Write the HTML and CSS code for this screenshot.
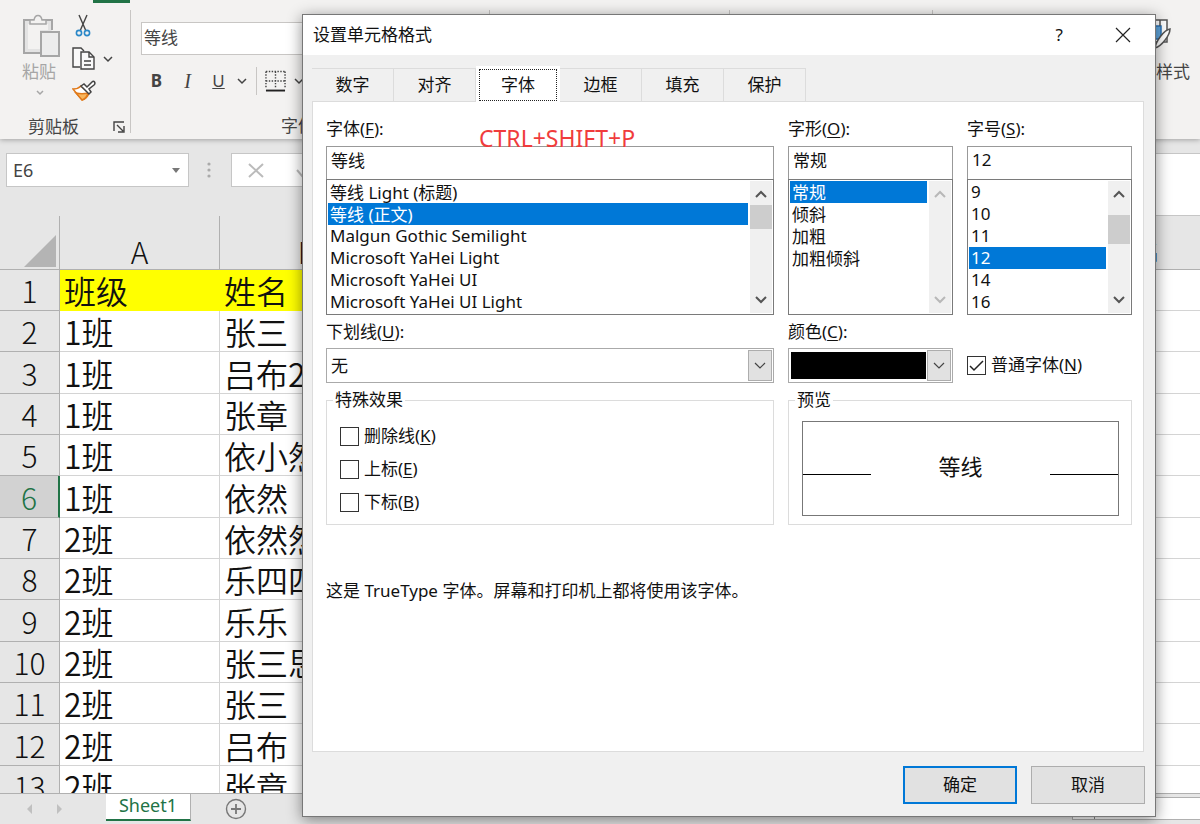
FILE: index.html
```
<!DOCTYPE html>
<html lang="zh-CN">
  <head>
    <meta charset="utf-8" />
    <title>设置单元格格式</title>
    <link rel="stylesheet" href="styles.css" />
  </head>
  <body>
    <div class="excel">
      <header class="ribbon">
        <div class="active-tab"></div>
        <div class="groups">
          <section class="group clipboard">
            <div class="group-body">
              <button class="paste" disabled>
                <svg width="40" height="44" viewBox="0 0 40 44" fill="none" stroke="#a6a6a6" stroke-width="2">
                  <path d="M18 39H2V6h28v10" fill="#e3e3e3" stroke="none" />
                  <path d="M6 35V10h20v6h-8v19z" stroke="none" fill="#f3f2f1" />
                  <path d="M18 39H2V6h28v10" />
                  <path d="M8 10V6h4c1-6 7-6 8 0h4v4z" fill="#f3f2f1" stroke-width="1.5" />
                  <path d="M19 18h18v24H19z" fill="#ececec" />
                </svg>
                <span>粘贴</span>
                <svg class="chevron" width="8" height="6" viewBox="0 0 8 6"><path d="M1 1l3 3 3-3" /></svg>
              </button>
              <div class="clip-tools">
                <button aria-label="剪切">
                  <svg width="16" height="24" viewBox="0 0 16 24" fill="none">
                    <path d="M4 1l7 16M12 1L5 17" stroke="#444" stroke-width="1.4" />
                    <circle cx="4" cy="19" r="2.6" stroke="#2b88c8" stroke-width="1.6" />
                    <circle cx="12" cy="19" r="2.6" stroke="#2b88c8" stroke-width="1.6" />
                  </svg>
                </button>
                <button aria-label="复制">
                  <svg width="24" height="24" viewBox="0 0 24 24" fill="#f9f9f9" stroke="#444" stroke-width="1.4">
                    <path d="M8 20H1V1h8l3 3" />
                    <path d="M9 5h8l5 5v12H9z" />
                    <path d="M17 5v5h5M12 14h7M12 18h7" fill="none" />
                  </svg>
                  <svg class="chevron" width="10" height="7" viewBox="0 0 10 7"><path d="M1 1l4 4 4-4" /></svg>
                </button>
                <button aria-label="格式刷">
                  <svg width="24" height="22" viewBox="0 0 24 22" fill="#fff" stroke-width="1.5">
                    <path d="M9 6C7 8 4 9 1 9l9 11c4-1 6-4 7-7z" stroke="#e07a1b" />
                    <path d="M4 13c4 1 8 1 12 0-1 4-3 6-6 7z" fill="#f9b65c" stroke="#e07a1b" />
                    <path d="M9 6l3-2 3 3 5-5c2-2 4 1 2 3l-5 4 2 3-2 2z" stroke="#444" />
                  </svg>
                </button>
              </div>
            </div>
            <footer>
              <span>剪贴板</span>
              <button class="launcher" aria-label="剪贴板选项">
                <svg width="12" height="12" viewBox="0 0 12 12" fill="none" stroke="#444" stroke-width="1.4">
                  <path d="M1 10V1h10M4 4l6 6M11 5v6H5" />
                </svg>
              </button>
            </footer>
          </section>
          <section class="group font-group">
            <input class="ribbon-font" value="等线" aria-label="字体名称" />
            <div class="font-tools">
              <button class="bold">B</button>
              <button class="italic">I</button>
              <button class="underline">U</button>
              <svg class="chevron" width="10" height="7" viewBox="0 0 10 7"><path d="M1 1l4 4 4-4" /></svg>
              <button class="borders" aria-label="边框">
                <svg width="22" height="22" viewBox="0 0 22 22" fill="none" stroke="#444" stroke-width="1.5">
                  <path d="M1 1h20M1 11h20M1 1v18M11 1v18M21 1v18" stroke-dasharray="1.5 1.5" />
                  <path d="M1 21h20" stroke="#222" stroke-width="2" />
                </svg>
              </button>
              <svg class="chevron" width="10" height="7" viewBox="0 0 10 7"><path d="M1 1l4 4 4-4" /></svg>
            </div>
            <footer><span>字体</span></footer>
          </section>
          <section class="group align-group"></section>
          <section class="group number-group"></section>
          <section class="group style-group">
            <svg width="32" height="32" viewBox="0 0 32 32" fill="#fff" stroke="#555" stroke-width="1.5">
              <path d="M1 2h26v22H1z" />
              <path d="M1 8h20v13H1z" fill="#62a8e0" stroke="#2b74b8" />
              <path d="M20 2v6M14 2v6" />
              <path d="M30 11c-6 1-14 12-15 19 7-2 15-13 15-19z" />
            </svg>
            <span>单元格样式</span>
          </section>
        </div>
      </header>

      <div class="formula-bar">
        <div class="name-box">
          <input value="E6" aria-label="名称框" />
          <svg width="8" height="5" viewBox="0 0 8 5"><path d="M0 0h8L4 5z" fill="#777" /></svg>
        </div>
        <svg class="grip" width="4" height="16" viewBox="0 0 4 16" fill="#aaa">
          <circle cx="2" cy="2" r="1.6" /><circle cx="2" cy="8" r="1.6" /><circle cx="2" cy="14" r="1.6" />
        </svg>
        <div class="fx">
          <svg width="16" height="16" viewBox="0 0 16 16" fill="none" stroke="#bbb" stroke-width="2"><path d="M1 2l14 13M15 2L1 15" /></svg>
          <svg width="16" height="16" viewBox="0 0 16 16" fill="none" stroke="#bbb" stroke-width="2"><path d="M1 8l5 6L15 2" /></svg>
        </div>
        <input class="formula" aria-label="编辑栏" />
      </div>

      <main class="sheet">
        <table>
          <colgroup>
            <col class="col-head" /><col class="col-a" /><col class="col-b" />
            <col /><col /><col /><col /><col class="col-g" />
          </colgroup>
          <thead>
            <tr>
              <th class="corner"><svg width="32" height="32" viewBox="0 0 32 32"><path d="M32 0v32H0z" fill="#b4b4b4" /></svg></th>
              <th>A</th><th>B</th><th>C</th><th>D</th><th>E</th><th>F</th><th>G</th>
            </tr>
          </thead>
          <tbody>
            <tr class="title-row"><th>1</th><td>班级</td><td>姓名</td><td></td><td></td><td></td><td></td><td></td></tr>
            <tr><th>2</th><td>1班</td><td>张三</td><td></td><td></td><td></td><td></td><td></td></tr>
            <tr><th>3</th><td>1班</td><td>吕布2</td><td></td><td></td><td></td><td></td><td></td></tr>
            <tr><th>4</th><td>1班</td><td>张章</td><td></td><td></td><td></td><td></td><td></td></tr>
            <tr><th>5</th><td>1班</td><td>依小然</td><td></td><td></td><td></td><td></td><td></td></tr>
            <tr class="current"><th>6</th><td>1班</td><td>依然</td><td></td><td></td><td></td><td></td><td></td></tr>
            <tr><th>7</th><td>2班</td><td>依然然</td><td></td><td></td><td></td><td></td><td></td></tr>
            <tr><th>8</th><td>2班</td><td>乐四四</td><td></td><td></td><td></td><td></td><td></td></tr>
            <tr><th>9</th><td>2班</td><td>乐乐</td><td></td><td></td><td></td><td></td><td></td></tr>
            <tr><th>10</th><td>2班</td><td>张三思</td><td></td><td></td><td></td><td></td><td></td></tr>
            <tr><th>11</th><td>2班</td><td>张三</td><td></td><td></td><td></td><td></td><td></td></tr>
            <tr><th>12</th><td>2班</td><td>吕布</td><td></td><td></td><td></td><td></td><td></td></tr>
            <tr><th>13</th><td>2班</td><td>张章</td><td></td><td></td><td></td><td></td><td></td></tr>
          </tbody>
        </table>
      </main>

      <nav class="sheet-tabs">
        <svg width="36" height="12" viewBox="0 0 36 12" fill="#c0c0c0"><path d="M6 1v10L1 6zM31 1v10l5-5z" /></svg>
        <a href="#sheet1">Sheet1</a>
        <button class="add-sheet" aria-label="新工作表">
          <svg width="22" height="22" viewBox="0 0 22 22" fill="none" stroke="#777" stroke-width="1.4">
            <circle cx="11" cy="11" r="9.5" /><path d="M11 6v10M6 11h10" stroke-width="1.8" />
          </svg>
        </button>
        <div class="h-scroll"><span></span></div>
      </nav>
    </div>

    <div class="dialog" role="dialog" aria-labelledby="dialog-title">
      <div class="title-bar">
        <h1 id="dialog-title">设置单元格格式</h1>
        <button aria-label="帮助">?</button>
        <button aria-label="关闭">
          <svg width="16" height="16" viewBox="0 0 16 16" stroke="#222" stroke-width="1.2"><path d="M1 1l14 14M15 1L1 15" /></svg>
        </button>
      </div>

      <div class="tabs" role="tablist">
        <button role="tab">数字</button>
        <button role="tab">对齐</button>
        <button role="tab" class="selected" aria-selected="true"><span>字体</span></button>
        <button role="tab">边框</button>
        <button role="tab">填充</button>
        <button role="tab">保护</button>
      </div>

      <form class="panel">
        <div class="field">
          <label for="font-name">字体(<u>F</u>):</label>
          <input id="font-name" value="等线" />
          <div class="list">
            <select size="6" aria-label="字体列表">
              <option>等线 Light (标题)</option>
              <option selected>等线 (正文)</option>
              <option>Malgun Gothic Semilight</option>
              <option>Microsoft YaHei Light</option>
              <option>Microsoft YaHei UI</option>
              <option>Microsoft YaHei UI Light</option>
            </select>
            <div class="scrollbar">
              <svg width="12" height="8" viewBox="0 0 12 8"><path d="M1 7l5-5 5 5" /></svg>
              <span class="thumb thumb-font"></span>
              <svg width="12" height="8" viewBox="0 0 12 8"><path d="M1 1l5 5 5-5" /></svg>
            </div>
          </div>
        </div>
        <div class="field">
          <label for="font-style">字形(<u>O</u>):</label>
          <input id="font-style" value="常规" />
          <div class="list">
            <select size="6" aria-label="字形列表">
              <option selected>常规</option>
              <option>倾斜</option>
              <option>加粗</option>
              <option>加粗倾斜</option>
            </select>
            <div class="scrollbar off">
              <svg width="12" height="8" viewBox="0 0 12 8"><path d="M1 7l5-5 5 5" /></svg>
              <svg width="12" height="8" viewBox="0 0 12 8"><path d="M1 1l5 5 5-5" /></svg>
            </div>
          </div>
        </div>
        <div class="field">
          <label for="font-size">字号(<u>S</u>):</label>
          <input id="font-size" value="12" />
          <div class="list">
            <select size="6" aria-label="字号列表">
              <option>9</option>
              <option>10</option>
              <option>11</option>
              <option selected>12</option>
              <option>14</option>
              <option>16</option>
            </select>
            <div class="scrollbar">
              <svg width="12" height="8" viewBox="0 0 12 8"><path d="M1 7l5-5 5 5" /></svg>
              <span class="thumb thumb-size"></span>
              <svg width="12" height="8" viewBox="0 0 12 8"><path d="M1 1l5 5 5-5" /></svg>
            </div>
          </div>
        </div>

        <div class="field">
          <label for="underline">下划线(<u>U</u>):</label>
          <div class="combo">
            <select id="underline"><option>无</option></select>
            <span class="drop"><svg width="12" height="7" viewBox="0 0 12 7"><path d="M1 1l5 5 5-5" /></svg></span>
          </div>
        </div>
        <div class="field">
          <label for="color">颜色(<u>C</u>):</label>
          <div class="combo color">
            <select id="color"></select>
            <span class="drop"><svg width="12" height="7" viewBox="0 0 12 7"><path d="M1 1l5 5 5-5" /></svg></span>
          </div>
        </div>
        <div class="normal">
          <label class="check"><input type="checkbox" checked /><span>普通字体(<u>N</u>)</span></label>
        </div>

        <fieldset class="effects">
          <legend>特殊效果</legend>
          <label class="check"><input type="checkbox" /><span>删除线(<u>K</u>)</span></label>
          <label class="check"><input type="checkbox" /><span>上标(<u>E</u>)</span></label>
          <label class="check"><input type="checkbox" /><span>下标(<u>B</u>)</span></label>
        </fieldset>
        <fieldset class="preview">
          <legend>预览</legend>
          <div class="sample"><span>等线</span></div>
        </fieldset>

        <p class="note">这是 TrueType 字体。屏幕和打印机上都将使用该字体。</p>
        <div class="shortcut">CTRL+SHIFT+P</div>
      </form>

      <div class="actions">
        <button class="ok">确定</button>
        <button>取消</button>
      </div>
    </div>
  </body>
</html>
```
FILE: styles.css
```
* {
  box-sizing: border-box;
}
body {
  margin: 0;
  font-family: "Noto Sans", "Noto Sans CJK SC", sans-serif;
  font-size: 17px;
  line-height: 22px;
  color: #111;
}
button,
input,
select {
  font: inherit;
  color: inherit;
}
button {
  border: 0;
  padding: 0;
  background: none;
}
select {
  appearance: none;
  border-radius: 0;
  outline: 0;
}
u {
  text-underline-offset: 2px;
}
.excel {
  display: flex;
  flex-direction: column;
  height: 100vh;
  overflow: hidden;
  background: #e6e6e6;
}

/* ribbon */
.ribbon {
  background: #f3f2f1;
  color: #444;
  box-shadow: 0 1px 5px rgba(0, 0, 0, 0.3);
}
.active-tab {
  width: 37px;
  height: 3px;
  margin-left: 93px;
  background: #217346;
}
.groups {
  display: flex;
  height: 136px;
  padding: 7px 0 6px;
}
.group {
  flex: none;
  border-right: 1px solid #c8c6c4;
}
.group footer {
  display: flex;
  justify-content: center;
}
.chevron {
  fill: none;
  stroke: #444;
  stroke-width: 1.5;
}
.clipboard {
  width: 131px;
}
.group-body {
  display: flex;
  height: 106px;
  padding: 4px 0 0 22px;
  gap: 10px;
}
.paste {
  display: flex;
  flex-direction: column;
  align-items: flex-start;
  width: 40px;
  color: #a6a6a6;
}
.paste span {
  margin: 3px 0 7px;
}
.paste .chevron {
  margin-left: 14px;
  stroke: #a6a6a6;
}
.clip-tools {
  display: flex;
  flex-direction: column;
  gap: 9px;
  align-items: flex-start;
}
.clip-tools button {
  display: flex;
  align-items: center;
  gap: 7px;
}
.clip-tools button:first-child {
  padding-left: 3px;
}
.clipboard footer {
  justify-content: space-between;
  align-items: center;
  padding: 0 5px 0 28px;
}
.launcher {
  display: flex;
}
.font-group {
  width: 359px;
  padding: 12px 10px 0;
}
.ribbon-font {
  display: block;
  width: 220px;
  height: 33px;
  padding: 0 2px 4px;
  border: 1px solid #c8c6c4;
  background: #fff;
}
.font-tools {
  display: flex;
  align-items: center;
  height: 32px;
  margin: 10px 0 18px;
}
.font-tools button {
  width: 31px;
}
.bold {
  font-weight: bold;
}
.italic {
  font-family: "Liberation Serif", serif;
  font-style: italic;
  font-size: 20px;
}
.underline {
  text-decoration: underline;
}
.font-tools .underline + .chevron {
  margin-left: 3px;
}
.font-tools .borders {
  display: flex;
  width: 38px;
  height: 28px;
  margin-left: 9px;
  padding: 3px 8px;
  border-left: 1px solid #c8c6c4;
}
.font-group footer {
  padding-right: 24px;
}
.align-group {
  width: 240px;
}
.number-group {
  width: 203px;
}
.style-group {
  flex: 1;
  display: flex;
  flex-direction: column;
  align-items: flex-end;
  gap: 11px;
  padding: 8px 10px 0;
  border: 0;
}
.style-group svg {
  margin-right: 18px;
}

/* formula bar */
.formula-bar {
  display: flex;
  align-items: flex-start;
  padding: 14px 0 0 6px;
}
.name-box {
  display: flex;
  align-items: center;
  width: 183px;
  height: 34px;
  padding: 0 8px 0 6px;
  border: 1px solid #c6c6c6;
  background: #fff;
  color: #444;
}
.name-box input {
  flex: 1;
  min-width: 0;
  padding: 0;
  border: 0;
  font-size: 18px;
}
.grip {
  margin: 9px 20px 0 18px;
}
.fx {
  display: flex;
  align-items: center;
  gap: 32px;
  width: 130px;
  height: 34px;
  padding-left: 16px;
  border: 1px solid #c6c6c6;
  background: #fff;
}
.formula {
  flex: 1;
  height: 63px;
  border: 1px solid #c6c6c6;
  border-right: 0;
  background: #fff;
}

/* sheet */
.sheet {
  flex: 1;
  min-height: 0;
  overflow: hidden;
  border-bottom: 1px solid #b0b0b0;
}
.sheet table {
  width: 1208px;
  min-width: 100%;
  table-layout: fixed;
  border-collapse: separate;
  border-spacing: 0;
  background: #fff;
  font-family: "Noto Sans CJK SC", sans-serif;
  font-size: 32px;
  font-weight: 350;
  line-height: 40px;
}
.col-head {
  width: 60px;
}
.col-a {
  width: 160px;
}
.col-b {
  width: 176px;
}
.col-g {
  width: 118px;
}
.sheet th,
.sheet td {
  height: 41px;
  padding: 0;
  border: solid #d4d4d4;
  border-width: 0 1px 1px 0;
  white-space: nowrap;
}
.sheet th {
  border-color: #b0b0b0;
  background: #e6e6e6;
  font-weight: 300;
  text-align: center;
}
.sheet td {
  padding-left: 4px;
}
.sheet tbody tr:nth-child(3n) th,
.sheet tbody tr:nth-child(3n) td {
  height: 42px;
}
.sheet thead th {
  height: 54px;
  padding-top: 13px;
  font-size: 30px;
  vertical-align: bottom;
  line-height: 36px;
}
.sheet .corner {
  padding: 0 3px 2px 0;
}
.corner svg {
  display: block;
  margin-left: auto;
}
.sheet tbody th {
  font-size: 30px;
}
.title-row td:nth-child(-n + 3) {
  border-color: #ff0;
  background: #ff0;
}
.sheet .current th {
  border-right: 2px solid #217346;
  background: #d2d2d2;
  color: #217346;
}

/* sheet tabs */
.sheet-tabs {
  display: flex;
  align-items: flex-start;
  height: 30px;
}
.sheet-tabs > svg {
  margin: 9px 44px 0 26px;
}
.sheet-tabs a {
  width: 85px;
  height: 27px;
  border-right: 1px solid #b0b0b0;
  border-bottom: 2px solid #217346;
  background: #fff;
  color: #217346;
  font-size: 18px;
  text-align: center;
  text-decoration: none;
}
.add-sheet {
  margin: 4px 0 0 34px;
}
.h-scroll {
  width: 128px;
  height: 23px;
  margin: 3px 0 0 auto;
  border: 1px solid #b0b0b0;
  border-right: 0;
  background: #fff;
}
.h-scroll span {
  display: block;
  width: 22px;
  height: 21px;
  border-right: 1px solid #888;
}

/* dialog */
.dialog {
  position: absolute;
  top: 14px;
  left: 302px;
  right: 44px;
  border: 1px solid #777;
  background: #f0f0f0;
  box-shadow: 0 3px 14px rgba(0, 0, 0, 0.45);
}
.title-bar {
  display: flex;
  align-items: center;
  height: 40px;
  padding: 0 24px 0 10px;
  background: #fff;
}
.title-bar h1 {
  flex: 1;
  margin: 0;
  font-size: 17px;
  font-weight: normal;
}
.title-bar button {
  display: flex;
  margin-left: 52px;
}
.tabs {
  display: flex;
  align-items: flex-end;
  height: 46px;
  padding: 0 9px;
}
.tabs button {
  width: 82px;
  height: 33px;
  border: 1px solid #dcdcdc;
  border-width: 1px 1px 0 0;
}
.tabs .selected {
  width: 84px;
  height: 36px;
  margin-bottom: -1px;
  padding: 3px;
  border: 0;
  background: #fff;
  z-index: 1;
}
.selected span {
  display: block;
  padding: 4px 0;
  border: 1px dotted #222;
}
.panel {
  position: relative;
  display: grid;
  grid-template-columns: 448fr 165fr 165fr;
  column-gap: 14px;
  align-content: start;
  min-height: 651px;
  margin: 0 11px 0 9px;
  padding: 16px 11px 16px 13px;
  border: 1px solid #dcdcdc;
  background: #fff;
}
.field {
  min-width: 0;
}
.field > label {
  display: block;
}
.field > input {
  display: block;
  width: 100%;
  height: 33px;
  margin-top: 6px;
  padding: 0 4px 7px;
  border: 1px solid #999;
  border-bottom: 0;
}
.list {
  display: flex;
  height: 136px;
  margin-bottom: 6px;
  padding: 1px;
  border: 1px solid #7a7a7a;
}
.list select {
  flex: 1;
  min-width: 0;
  padding: 0;
  border: 0;
  overflow: hidden;
}
.list option {
  display: flex;
  align-items: center;
  height: 22px;
  min-height: 22px;
  padding: 0 2px 2px;
}
.list option:checked {
  background: linear-gradient(#0078d7, #0078d7);
  -webkit-text-fill-color: #fff;
}
.scrollbar {
  display: flex;
  flex-direction: column;
  justify-content: space-between;
  align-items: center;
  width: 22px;
  margin-left: 2px;
  padding: 9px 0;
  background: #f0f0f0;
}
.scrollbar svg {
  fill: none;
  stroke: #555;
  stroke-width: 2;
}
.scrollbar.off svg {
  stroke: #b8b8b8;
}
.thumb {
  width: 100%;
  margin-bottom: auto;
  background: #cdcdcd;
}
.thumb-font {
  height: 24px;
  margin-top: 7px;
}
.thumb-size {
  height: 29px;
  margin-top: 17px;
}
.combo {
  display: grid;
  height: 35px;
  margin-top: 5px;
}
.combo > * {
  grid-area: 1 / 1;
}
.combo select {
  width: 100%;
  padding: 0 4px;
  border: 1px solid #aaa;
  background: #fff;
}
.drop {
  display: flex;
  align-items: center;
  justify-content: center;
  justify-self: end;
  width: 24px;
  margin: 2px;
  border: 1px solid #adadad;
  background: #e1e1e1;
  pointer-events: none;
}
.drop svg {
  fill: none;
  stroke: #444;
  stroke-width: 1.2;
}
.combo.color select {
  padding: 3px 26px 3px 2px;
  background: #000 content-box;
}
.normal {
  display: flex;
  align-items: flex-end;
  padding-bottom: 7px;
}
.check {
  display: flex;
  align-items: center;
  white-space: nowrap;
}
.check input {
  appearance: none;
  width: 19px;
  height: 19px;
  margin: 0 5px 0 0;
  border: 1px solid #333;
  background: #fff;
}
.check input:checked {
  background: url("data:image/svg+xml,%3Csvg xmlns='http://www.w3.org/2000/svg' viewBox='0 0 17 17'%3E%3Cpath d='M2 9l4 4 9-9' fill='none' stroke='%23222' stroke-width='1.5'/%3E%3C/svg%3E");
}
fieldset {
  min-width: 0;
  height: 136px;
  margin: 6px 0 0;
  border: 1px solid #dcdcdc;
}
legend {
  padding: 0 2px;
}
.effects {
  display: flex;
  flex-direction: column;
  gap: 11px;
  padding: 14px 13px 0;
}
.effects legend {
  margin-left: -7px;
}
.preview {
  grid-column: 2 / 4;
  padding: 10px 12px 0 13px;
}
.preview legend {
  margin-left: -7px;
}
.sample {
  display: flex;
  align-items: center;
  justify-content: space-between;
  height: 95px;
  border: 1px solid #777;
  font-size: 22px;
}
.sample span {
  margin-bottom: 6px;
}
.sample::before,
.sample::after {
  content: "";
  width: 68px;
  height: 1px;
  margin-top: 12px;
  background: #000;
}
.note {
  grid-column: 1 / 4;
  margin: 55px 0 0;
}
.shortcut {
  position: absolute;
  top: 25px;
  left: 166px;
  font-size: 23px;
  color: #f03c3c;
}
.actions {
  display: flex;
  justify-content: flex-end;
  gap: 14px;
  padding: 14px 10px 12px;
}
.actions button {
  width: 114px;
  height: 38px;
  border: 1px solid #adadad;
  background: #e1e1e1;
}
.actions .ok {
  border: 2px solid #0078d7;
}
```
